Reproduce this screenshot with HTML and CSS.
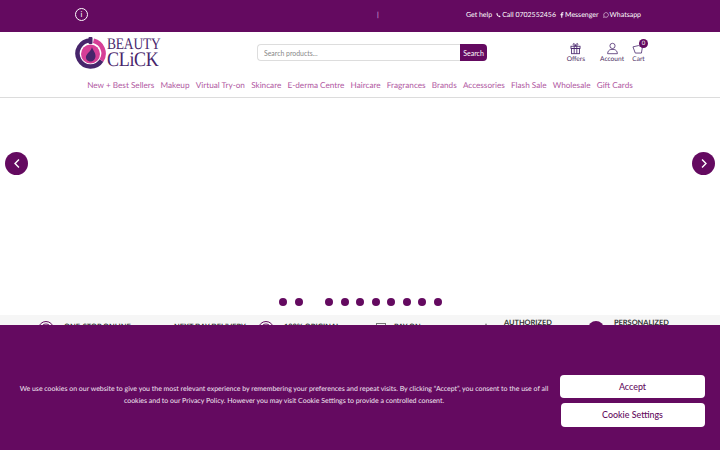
FILE: index.html
```html
<!DOCTYPE html>
<html lang="en">
<head>
<meta charset="utf-8">
<title>Beauty Click</title>
<link rel="stylesheet" href="styles.css">
</head>
<body>
<div class="topbar">
  <div class="info-icon">i</div>
  <div class="ticker">|</div>
  <div class="help">
    <span>Get help</span>
    <span class="help-item"><svg class="mini phone" viewBox="0 0 10 10"><path d="M2.2 .8 L3.8 3 L3 4.1 C3.5 5.3 4.6 6.5 5.9 7 L7 6.2 L9.2 7.8 C8.8 9 7.8 9.5 6.8 9.2 C3.9 8.4 1.5 6 .8 3.2 C.5 2.2 1 1.2 2.2 .8Z" fill="#fff"/></svg>Call 0702552456</span>
    <span class="help-item"><svg class="mini fb" viewBox="2 0 7 10"><path d="M6 10V5.6H7.6L7.9 3.9H6V2.9C6 2.3 6.2 2 6.9 2H8V.4C7.7.3 7.1.3 6.5.3 5.1.3 4.2 1.1 4.2 2.6V3.9H2.6V5.6H4.2V10Z" fill="#fff"/></svg>Messenger</span>
    <span class="help-item"><svg class="mini" viewBox="0 0 10 10"><path d="M1 9 L1.7 6.800 A3.9 3.9 0 1 1 3.2 8.3 Z" fill="none" stroke="#fff" stroke-width=".9"/></svg>Whatsapp</span>
  </div>
</div>

<header class="header">
  <div class="header-main">
    <div class="logo">
      <svg class="logo-mark" viewBox="0 0 31 32">
        <path d="M15.500 3.500 A13 13 0 1 0 26.500 23.500" fill="none" stroke="#47256b" stroke-width="4.500"/>
        <path d="M18.500 3.800 A13 13 0 0 1 26.500 23.500" fill="none" stroke="#d63f97" stroke-width="4.500"/>
        <circle cx="15.500" cy="17" r="9.500" fill="#d63f97"/>
        <rect x="13.500" y="0" width="4" height="7" rx="1" fill="#47256b"/>
        <path d="M17 10 C17.500 13 20.500 15 20.500 19 C20.500 22.500 18 24.500 15.500 24.500 C12.500 24.500 10.500 22 11 19.500 C11.500 16.500 16 14.500 17 10Z" fill="#47256b"/>
      </svg>
      <div class="logo-text">
        <div class="logo-beauty">BEAUTY</div>
        <div class="logo-click">CLiCK</div>
      </div>
    </div>
    <form class="search">
      <input class="search-input" type="text" placeholder="Search products...">
      <button class="search-btn" type="button">Search</button>
    </form>
    <div class="actions">
      <div class="action">
        <svg class="action-icon" viewBox="0 0 20 20" fill="none" stroke="#47256b" stroke-width="1.3"><rect x="3" y="6.5" width="14" height="3.5"/><rect x="4" y="10" width="12" height="8"/><path d="M8 6.5V18M12 6.5V18M10 6C8 6 6 5 6.5 3S9.500 3 10 6C10.500 3 13 1 13.500 3S12 6 10 6Z"/></svg>
        <span>Offers</span>
      </div>
      <div class="action">
        <svg class="action-icon" viewBox="0 0 20 20" fill="none" stroke="#47256b" stroke-width="1.200"><circle cx="10" cy="6" r="4"/><path d="M2.500 18C2.500 14 5 12 7.500 11.500H12.500C15 12 17.500 14 17.500 18Z"/></svg>
        <span>Account</span>
      </div>
      <div class="action cart">
        <svg class="action-icon" viewBox="0 0 20 20" fill="none" stroke="#47256b" stroke-width="1.200"><path d="M1.500 7.500L10 5.500L16 8L14.500 17H5Z"/></svg>
        <span>Cart</span>
        <b class="badge">0</b>
      </div>
    </div>
  </div>
  <nav class="nav">
    <a>New + Best Sellers</a>
    <a>Makeup</a>
    <a>Virtual Try-on</a>
    <a>Skincare</a>
    <a>E-derma Centre</a>
    <a>Haircare</a>
    <a>Fragrances</a>
    <a>Brands</a>
    <a>Accessories</a>
    <a>Flash Sale</a>
    <a>Wholesale</a>
    <a>Gift Cards</a>
  </nav>
</header>

<section class="slider">
  <button class="arrow" type="button">
    <svg viewBox="0 0 10 14" class="chev"><path d="M7.500 2L2.500 7L7.500 12" fill="none" stroke="#fff" stroke-width="1.800"/></svg>
  </button>
  <button class="arrow" type="button">
    <svg viewBox="0 0 10 14" class="chev"><path d="M2.500 2L7.500 7L2.500 12" fill="none" stroke="#fff" stroke-width="1.800"/></svg>
  </button>
  <div class="dots">
    <i class="dot"></i><i class="dot"></i><i class="dot dot-gap"></i><i class="dot"></i><i class="dot"></i><i class="dot"></i><i class="dot"></i><i class="dot"></i><i class="dot"></i><i class="dot"></i>
  </div>
</section>

<section class="features">
  <div class="feature"><svg class="feature-icon" viewBox="0 0 16 16" fill="none" stroke="#640a60"><circle cx="8" cy="8" r="7.500"/><circle cx="8" cy="8" r="5"/></svg><span class="feature-text low">ONE-STOP ONLINE</span></div>
  <div class="feature"><span class="icon-slot"></span><span class="feature-text low">NEXT DAY DELIVERY</span></div>
  <div class="feature"><svg class="feature-icon" viewBox="0 0 16 16" fill="none" stroke="#640a60"><circle cx="8" cy="8" r="7.500"/><circle cx="8" cy="8" r="5"/></svg><span class="feature-text low">100% ORIGINAL</span></div>
  <div class="feature"><svg class="feature-icon small" viewBox="0 0 10 16" fill="none" stroke="#777"><rect x=".5" y=".5" width="9" height="15"/></svg><span class="feature-text low">PAY ON</span></div>
  <div class="feature"><svg class="feature-icon tiny" viewBox="0 0 6 6"><path d="M3 0L5 6H1Z" fill="#444"/></svg><span class="feature-text">AUTHORIZED</span></div>
  <div class="feature"><svg class="feature-icon" viewBox="0 0 16 16"><circle cx="8" cy="8" r="8" fill="#640a60"/></svg><span class="feature-text">PERSONALIZED</span></div>
</section>

<aside class="cookie">
  <p class="cookie-text">We use cookies on our website to give you the most relevant experience by remembering your preferences and repeat visits. By clicking “Accept”, you consent to the use of all cookies and to our Privacy Policy. However you may visit Cookie Settings to provide a controlled consent.</p>
  <div class="cookie-actions">
    <button class="cookie-btn" type="button">Accept</button>
    <button class="cookie-btn secondary" type="button">Cookie Settings</button>
  </div>
</aside>
</body>
</html>
```

FILE: styles.css
```css
* { box-sizing: border-box; }
html, body { margin: 0; height: 450px; overflow: hidden; background: #fff; }
body { font-family: Lato, "Open Sans", sans-serif; color: #333; text-rendering: geometricPrecision; }

.topbar {
  height: 32px;
  background: #640a60;
  color: #fff;
  display: flex;
  align-items: center;
  padding: 0 79px 3px 75px;
  font-size: 7px;
}
.info-icon {
  width: 13px; height: 13px;
  border: 1px solid #fff;
  border-radius: 50%;
  font-size: 8px;
  line-height: 11px;
  text-align: center;
}
.ticker { margin-left: 289px; color: #e6c8e4; }
.help { margin-left: auto; display: flex; gap: 4px; white-space: nowrap; }
.help-item { display: inline-flex; align-items: center; gap: 1px; }
.mini { width: 6px; height: 6px; }
.mini.phone { width: 5px; }
.mini.fb { width: 4px; }

.header { height: 66px; border-bottom: 1px solid #dcdcdc; }
.header-main {
  height: 44px;
  padding: 4px 75px 0 75px;
  display: flex;
  align-items: flex-start;
}
.logo { display: flex; align-items: center; width: 182px; height: 33px; gap: 1px; }
.logo-mark { width: 31px; height: 32px; flex: none; }
.logo-text { color: #47256b; font-family: "Liberation Serif", serif; line-height: 1; }
.logo-beauty { font-size: 13.500px; line-height: 14px; letter-spacing: -.2px; transform: scaleY(1.2); }
.logo-click { font-size: 18px; line-height: 17px; letter-spacing: -.3px; transform: scaleY(1.15); }

.search { display: flex; width: 230px; height: 17px; margin-top: 8px; }
.search-input {
  flex: 1; min-width: 0;
  border: 1px solid #ddd; border-right: 0;
  border-radius: 4px 0 0 4px;
  padding: 0 6px;
  font: 6.900px Lato, sans-serif;
  background: #fff;
}
.search-input::placeholder { color: #888; opacity: 1; }
.search-btn {
  width: 27px;
  border: 0; padding: 0;
  background: #640a60; color: #fff;
  border-radius: 0 4px 4px 0;
  font: 7px Lato, sans-serif;
}

.actions { margin-left: auto; display: flex; gap: 15px; padding-top: 6px; }
.action {
  position: relative;
  display: flex; flex-direction: column; align-items: center;
  font-size: 6.600px; line-height: 8px;
  color: #4a2a60;
}
.action.cart { margin-left: -7px; }
.action-icon { width: 13px; height: 13px; }
.badge {
  position: absolute; top: -3px; right: -3px;
  width: 9px; height: 9px; border-radius: 50%;
  background: #640a60; color: #fff;
  font-size: 6px; line-height: 9px; font-weight: 400; text-align: center;
}

.nav {
  display: flex; justify-content: center; gap: 6.200px;
  font-size: 8.200px; line-height: 14px;
  color: #b0579f;
  padding-top: 2px;
  white-space: nowrap;
}

.slider {
  position: relative;
  height: 217px;
  display: flex; justify-content: space-between; align-items: flex-start;
  padding: 54px 5px 0;
}
.arrow {
  width: 23px; height: 23px; border: 0; padding: 0;
  border-radius: 50%; background: #640a60;
  display: flex; align-items: center; justify-content: center;
}
.chev { width: 8px; height: 11px; }
.dots {
  position: absolute; left: 279px; top: 200px;
  display: flex; gap: 7.500px;
}
.dot { width: 8px; height: 8px; border-radius: 50%; background: #640a60; }
.dot-gap { margin-left: 15px; }

.features {
  height: 40px;
  background: #f6f6f6;
  display: grid;
  grid-template-columns: repeat(6, 110px);
  padding: 3px 0 0 38px;
  font-size: 7.400px;
}
.feature { display: flex; align-items: flex-start; gap: 10px; color: #333; font-weight: 700; }
.icon-slot { width: 16px; flex: none; }
.feature-icon { width: 16px; height: 16px; margin-top: 3px; flex: none; }
.feature-icon.small { width: 10px; margin: 5px -2px 0 8px; }
.feature-icon.tiny { width: 6px; height: 6px; margin: 5px 5px 0; }
.feature-text { line-height: 9px; white-space: nowrap; }
.feature-text.low { margin-top: 3.500px; }

.cookie {
  position: fixed; left: 0; right: 0; bottom: 0;
  height: 125px;
  background: #640a60;
  display: flex; align-items: center;
  padding: 8px 16px 0 16px;
  gap: 8px;
}
.cookie-text {
  margin: 7px 0 0;
  width: 536px; flex: none;
  color: #f2e6f1;
  font-size: 6.980px;
  line-height: 12px;
  text-align: center;
}
.cookie-actions { flex: 1; display: flex; flex-direction: column; align-items: center; gap: 5px; margin-top: 18px; }
.cookie-btn {
  width: 145px; height: 23px;
  border: 0; border-radius: 4px;
  background: #fff; color: #640a60;
  font: 500 8.900px Lato, sans-serif;
}
.cookie-btn.secondary { width: 144px; height: 24px; }
```
